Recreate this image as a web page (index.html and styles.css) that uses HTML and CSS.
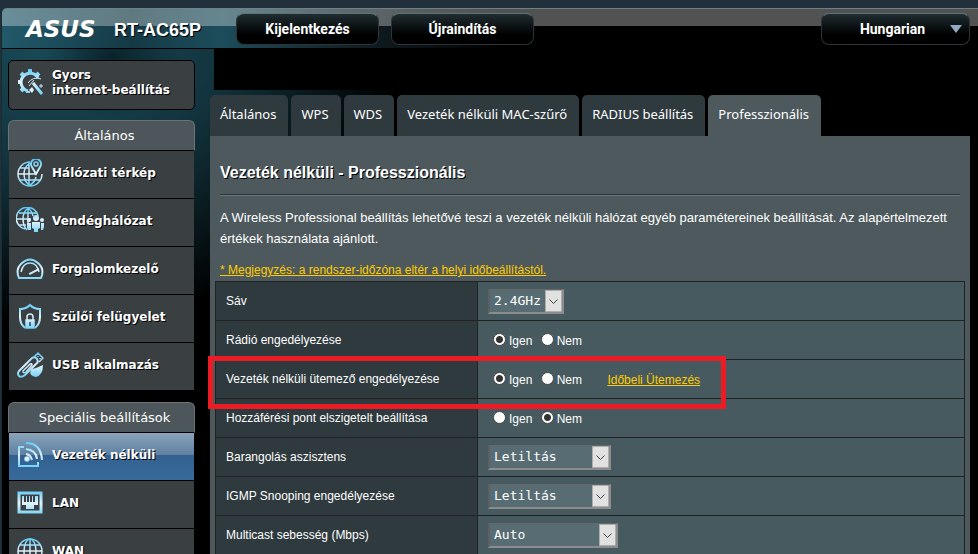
FILE: index.html
```html
<!DOCTYPE html>
<html lang="hu">
<head>
  <meta charset="UTF-8">
  <title>RT-AC65P - Professzionális</title>
  <link rel="stylesheet" href="styles.css">
</head>
<body>
<svg class="defs" width="0" height="0">
  <defs>
    <linearGradient id="ice" gradientUnits="userSpaceOnUse" x1="0" y1="0" x2="0" y2="28">
      <stop offset="0" stop-color="#4fc8f8"/>
      <stop offset="0.5" stop-color="#e4f2fb"/>
      <stop offset="1" stop-color="#5fcdf8"/>
    </linearGradient>
    <g id="globe">
      <circle cx="14" cy="14" r="12"/>
      <ellipse cx="14" cy="14" rx="6" ry="12"/>
      <path d="M14 2v24M2 14h24M4 8h20M4 20h20"/>
    </g>
  </defs>
</svg>
<div class="shell">
  <header class="top">
    <span class="logo">ASUS</span>
    <span class="model">RT-AC65P</span>
    <button type="button" class="top-btn">Kijelentkezés</button>
    <button type="button" class="top-btn">Újraindítás</button>
    <button type="button" class="top-btn lang">Hungarian<span class="caret"></span></button>
  </header>

  <div class="main">
    <nav class="sidebar">
      <a href="#" class="quick">
        <svg viewBox="0 0 28 28">
          <path stroke-width="3" d="M22 10A9 9 0 1 0 12 23"/>
          <path stroke-width="4" d="M14 5V1M8 8L5 5M6 14H2M8 20l-3 3M20 8l3-3M12 23v2"/>
          <path d="M12 15q5-7 13-4M13 18l5-6M23 18h4M25 16v4" stroke-width="1"/>
          <path d="M17 15l9 11" stroke-width="3"/>
          <path d="M16 19l2 3-2 3-3-3z" fill="#e4f2fb" stroke="none"/>
        </svg>
        <span>Gyors<br>internet-beállítás</span>
      </a>

      <h2>Általános</h2>
      <ul>
        <li><a href="#">
          <svg viewBox="0 0 28 28"><path d="M14 3A12 12 0 1 0 26 15M14 4q-6 4-6 11t5 11M13 3v24M2 15h18M4 9h9M4 21h20M20 18q-1 5-6 8"/><path d="M20 15l-4-7a5 5 0 1 1 8 0z" fill="#3a3f42" stroke-width="2"/><circle cx="20" cy="5" r="2"/></svg>
          Hálózati térkép</a></li>
        <li><a href="#">
          <svg viewBox="0 0 28 28"><path d="M22 9A11 11 0 1 0 9 22M12 1q-5 4-5 11t4 11M12 1q4 3 5 8M12 1v21M1 12h14M3 6h18M3 18h7"/><g fill="url(#ice)" stroke="none"><circle cx="20" cy="11" r="3"/><path d="M16 15h8v6l-2 1v3h-4v-3l-2-1z"/><circle cx="13" cy="13" r="2"/><circle cx="26" cy="13" r="2"/><path d="M11 16h4v7h-3l-1-3zM25 16h3v4l-1 3h-2z"/></g></svg>
          Vendéghálózat</a></li>
        <li><a href="#">
          <svg viewBox="0 0 28 28"><path stroke-width="2" d="M3 23q-4-9 3-15 8-7 16 0 7 6 3 15z"/><path d="M5 17q2-9 9-9t9 9M14 19l9-5"/><path d="M13 19l8-4"/></svg>
          Forgalomkezelő</a></li>
        <li><a href="#">
          <svg viewBox="0 0 28 28"><path stroke-width="2" d="M9 25q-5-4-5-11V6q6 0 10-4 4 4 10 4v8q0 7-5 11"/><path d="M11 17v-3a3 3 0 0 1 6 0v3"/><path fill="url(#ice)" d="M10 17h8v8h-8z"/><path d="M14 19v4" stroke="#3a3f42"/></svg>
          Szülői felügyelet</a></li>
        <li><a href="#">
          <svg viewBox="0 0 28 28"><path stroke-width="2" d="M3 20L16 7q3-2 5 1t-1 5L9 24q-4 3-6 1t0-5z"/><path d="M7 20l7-7q2-1 2 1l-6 7q-3 2-3-1zM18 6l4-4 5 5-4 4M22 5v1M24 7v1"/><path d="M16 18q5-1 11-4 0 10-7 12-9-2-4-8z" fill="url(#ice)" stroke="none"/></svg>
          USB alkalmazás</a></li>
      </ul>

      <h2>Speciális beállítások</h2>
      <ul>
        <li class="active"><a href="#">
          <svg viewBox="0 0 28 28"><path stroke-width="2" d="M8 6H3v19h19v-4"/><path stroke-width="2" d="M10 2q15 0 16 17M10 8q10 1 11 10M10 13q5 1 6 6"/><circle cx="11" cy="18" r="2" fill="#fff"/></svg>
          Vezeték nélküli</a></li>
        <li><a href="#">
          <svg viewBox="0 0 28 28"><path stroke-width="3" d="M3 4h22v19H3z"/><path fill="url(#ice)" stroke="none" d="M6 7h2v6h2V7h1v6h2V7h1v6h2V7h1v6h2V7h3v9h-4v4h-8v-4H6z"/></svg>
          LAN</a></li>
        <li><a href="#">
          <svg viewBox="0 0 28 28"><use href="#globe"/></svg>
          WAN</a></li>
      </ul>
    </nav>

    <main class="content">
      <div class="masked"></div>
      <div class="tabs">
        <a href="#">Általános</a>
        <a href="#">WPS</a>
        <a href="#">WDS</a>
        <a href="#">Vezeték nélküli MAC-szűrő</a>
        <a href="#">RADIUS beállítás</a>
        <a href="#" class="active">Professzionális</a>
      </div>
      <div class="panel">
        <h1>Vezeték nélküli - Professzionális</h1>
        <p>A Wireless Professional beállítás lehetővé teszi a vezeték nélküli hálózat egyéb paramétereinek beállítását. Az alapértelmezett értékek használata ajánlott.</p>
        <a href="#" class="note">* Megjegyzés: a rendszer-időzóna eltér a helyi időbeállítástól.</a>
        <table>
          <tr>
            <th><label for="band">Sáv</label></th>
            <td><select id="band" class="small"><option>2.4GHz</option><option>5GHz</option></select></td>
          </tr>
          <tr>
            <th>Rádió engedélyezése</th>
            <td>
              <label><input type="radio" name="radio" checked>Igen</label>
              <label><input type="radio" name="radio">Nem</label>
            </td>
          </tr>
          <tr>
            <th class="marked">Vezeték nélküli ütemező engedélyezése</th>
            <td>
              <label><input type="radio" name="sched" checked>Igen</label>
              <label><input type="radio" name="sched">Nem</label>
              <a href="#" class="schedule">Időbeli Ütemezés</a>
            </td>
          </tr>
          <tr>
            <th>Hozzáférési pont elszigetelt beállítása</th>
            <td>
              <label><input type="radio" name="isolate">Igen</label>
              <label><input type="radio" name="isolate" checked>Nem</label>
            </td>
          </tr>
          <tr>
            <th><label for="roam">Barangolás aszisztens</label></th>
            <td><select id="roam" class="medium"><option>Letiltás</option><option>Engedélyezés</option></select></td>
          </tr>
          <tr>
            <th><label for="igmp">IGMP Snooping engedélyezése</label></th>
            <td><select id="igmp" class="medium"><option>Letiltás</option><option>Engedélyezés</option></select></td>
          </tr>
          <tr>
            <th><label for="mcast">Multicast sebesség (Mbps)</label></th>
            <td><select id="mcast" class="large"><option>Auto</option></select></td>
          </tr>
        </table>
      </div>
    </main>
  </div>
</div>
</body>
</html>
```
FILE: styles.css
```css
*, *::before, *::after {
  box-sizing: border-box;
}
body {
  margin: 0;
  height: 100vh;
  overflow: hidden;
  background: #22303c;
  color: #fff;
  font-family: "Liberation Sans", Arial, sans-serif;
  font-size: 12px;
}
a {
  color: inherit;
  text-decoration: none;
}
.defs {
  position: absolute;
}
.shell {
  margin: 8px 0 0 1px;
  min-height: 100vh;
  border-left: 1px solid #1b2b33;
  border-radius: 5px 0 0 0;
  background:
    radial-gradient(ellipse 70px 60px at 110px 50px, rgba(4, 20, 27, 0.7), transparent),
    radial-gradient(ellipse 340px 310px at 60px 10px, #1b505e 0%, #12333d 50%, #000 100%);
}

/* top bar */
.top {
  display: flex;
  align-items: center;
  height: 41px;
  padding: 0 8px 0 24px;
  border-top: 1px solid #6d8187;
  border-bottom: 1px solid #000;
  border-radius: 5px 0 0 0;
  background:
    linear-gradient(rgba(255, 255, 255, 0.32), rgba(255, 255, 255, 0.32)) top / 100% 17px no-repeat,
    linear-gradient(90deg, #22596a 0, #153a46 130px, #1d4d5b 220px, #101d22 360px, #000 500px);
}
.logo {
  width: 88px;
  font: italic bold 23px/24px "DejaVu Sans", sans-serif;
}
.model {
  width: 122px;
  padding-top: 3px;
  font-size: 18px;
  font-weight: bold;
  text-shadow: 1px 1px 0 #000;
}
.top-btn {
  position: relative;
  width: 143px;
  height: 32px;
  margin-right: 12px;
  padding: 0;
  border: 1px solid #2d3336;
  border-top-color: #5f7277;
  border-radius: 8px;
  background: linear-gradient(#1f2d31, #000 70%);
  color: #fff;
  font: bold 14px Roboto, sans-serif;
}
.lang {
  width: 149px;
  margin: 0 0 0 auto;
  padding-right: 6px;
}
.caret {
  position: absolute;
  right: 7px;
  top: 11px;
  border: 6px solid transparent;
  border-top: 8px solid #93a9c0;
  border-bottom: 0;
}

.main {
  display: flex;
  gap: 15px;
  padding: 0 8px 0 6px;
}

/* left menu */
.sidebar {
  flex: none;
  width: 187px;
  padding-top: 11px;
  font: bold 12px/15px "DejaVu Sans", sans-serif;
}
.sidebar svg {
  flex: none;
  width: 28px;
  height: 28px;
  fill: none;
  stroke: url(#ice);
  stroke-width: 1.5;
}
.quick {
  display: flex;
  height: 50px;
  padding: 7px 7px;
  gap: 8px;
  margin-bottom: 10px;
  border: 1px solid #000;
  border-radius: 5px;
  background: #3a3f42;
  text-shadow: 1px 1px 0 #000;
}
.sidebar h2 {
  height: 31px;
  margin: 0;
  padding-left: 6px;
  border: 1px solid #6b7374;
  border-bottom: 1px solid #000;
  border-radius: 6px 6px 0 0;
  background: #4d575b;
  font: 13px/30px "DejaVu Sans", sans-serif;
  text-align: center;
}
.sidebar ul {
  margin: 0 1px 11px;
  padding: 0;
  list-style: none;
}
.sidebar li {
  height: 48px;
  border-bottom: 1px solid #000;
  background: #3a3f42;
}
.sidebar li a {
  display: flex;
  gap: 8px;
  height: 44px;
  padding-left: 7px;
  align-items: center;
  text-shadow: 1px 1px 0 #000;
}
.sidebar li.active {
  background: linear-gradient(#8aa3b9, #5f81a2 46%, #33608f 46%, #376b9b);
}

/* content */
.content {
  flex: 1;
}
.masked {
  height: 41px;
  margin: 0 2px 5px 4px;
  background: #000;
}
.tabs {
  display: flex;
  gap: 3px;
  font: 13px/39px "Noto Sans", sans-serif;
}
.tabs a {
  height: 41px;
  padding: 0 12px 0 10px;
  border-radius: 5px 5px 0 0;
  background: #2f3a3e;
  white-space: nowrap;
}
.tabs .active {
  background: #4d595d;
}
.panel {
  min-height: 440px;
  padding: 27px 5px 0;
  background: #4d595d;
}
.panel h1 {
  height: 32px;
  margin: 0 5px 12px;
  border-bottom: 1px solid #2b3336;
  box-shadow: 0 1px 0 #6b777b;
  font-size: 16px;
  line-height: 20px;
  text-shadow: 1px 1px 0 #000;
}
.panel p {
  margin: 0 5px 12px;
  font-size: 13px;
  line-height: 21px;
}
.note {
  display: block;
  height: 20px;
  margin-left: 5px;
  line-height: 18px;
}
.note, .schedule {
  color: #fc0;
  text-decoration: underline;
}

table {
  width: 100%;
  border-collapse: collapse;
}
th, td {
  height: 39px;
  padding: 0 10px;
  border: 1px solid #222;
}
th {
  position: relative;
  width: 262px;
  background: #2f3a3e;
  font-weight: normal;
  text-align: left;
  white-space: nowrap;
}
td {
  background: #475a5f;
}
td label {
  display: inline-block;
}
.schedule {
  margin-left: 22px;
}
/* red frame round the scheduler row */
.marked::after {
  content: "";
  position: absolute;
  z-index: 1;
  left: -8px;
  top: -4px;
  width: 518px;
  height: 53px;
  border: 5px solid #ed1c24;
  pointer-events: none;
}

select {
  display: block;
  height: 25px;
  padding: 0 4px;
  appearance: none;
  border: 2px solid #8c8c8c;
  border-top: 1px solid #666;
  border-left-color: #5d6062;
  border-radius: 0;
  background: #576d73 url("data:image/svg+xml,%3Csvg xmlns='http://www.w3.org/2000/svg' width='17' height='22'%3E%3Cpath d='M.5.5h16v21H.5z' fill='%23e1e1e1' stroke='%23adadad'/%3E%3Cpath d='M4.500 9.500l4 4 4-4' fill='none' stroke='%23444'/%3E%3C/svg%3E") right center no-repeat;
  color: #fff;
  font: 13px "DejaVu Sans Mono", monospace;
}
.small {
  width: 76px;
}
.medium {
  width: 123px;
}
.large {
  width: 130px;
}
input[type="radio"] {
  appearance: none;
  width: 13px;
  height: 13px;
  margin: 0 3px 0 5px;
  vertical-align: -1px;
  border: 1px solid #444;
  border-radius: 50%;
  background: #fff;
}
input[type="radio"]:checked {
  background: radial-gradient(circle, #333 0 3px, #fff 4px);
}
```
